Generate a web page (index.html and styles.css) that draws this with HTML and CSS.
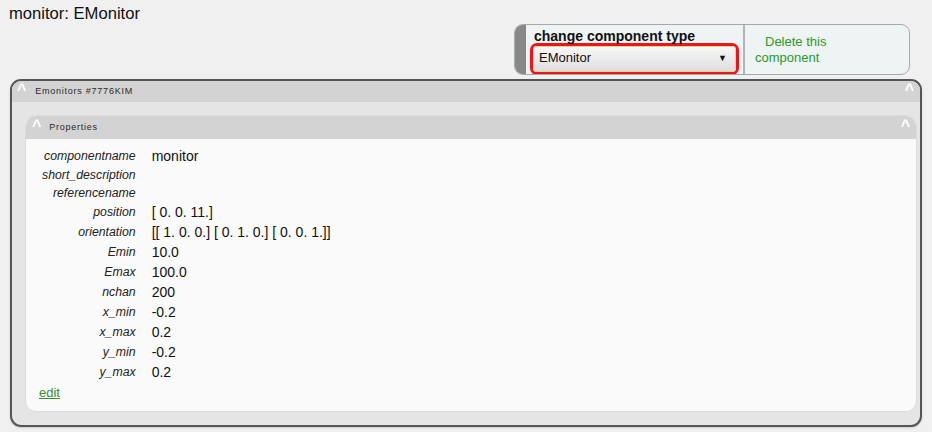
FILE: index.html
```html
<!DOCTYPE html>
<html>
<head>
<meta charset="utf-8">
<link rel="stylesheet" href="styles.css">
</head>
<body>
<h1 class="title">monitor: EMonitor</h1>
<div class="toolbar-row">
  <div class="toolbar">
    <div class="grip"></div>
    <div class="type-section">
      <div class="type-label">change component type</div>
      <div class="select-ring">
        <div class="select"><span>EMonitor</span><span class="arrow">▼</span></div>
      </div>
    </div>
    <div class="delete-section">
      <a class="delete-link">Delete this component</a>
    </div>
  </div>
</div>
<div class="panel outer">
  <div class="panel-head">
    <span class="caret">^</span>
    <span class="panel-title">Emonitors #7776KIM</span>
    <span class="caret caret-right">^</span>
  </div>
  <div class="outer-body">
    <div class="panel inner">
      <div class="panel-head inner-head">
        <span class="caret">^</span>
        <span class="panel-title">Properties</span>
        <span class="caret caret-right">^</span>
      </div>
      <div class="inner-body">
        <table class="props">
          <tr><td class="k">componentname</td><td class="v">monitor</td></tr>
          <tr><td class="k">short_description</td><td class="v empty"></td></tr>
          <tr><td class="k">referencename</td><td class="v empty"></td></tr>
          <tr><td class="k">position</td><td class="v">[ 0. 0. 11.]</td></tr>
          <tr><td class="k">orientation</td><td class="v">[[ 1. 0. 0.] [ 0. 1. 0.] [ 0. 0. 1.]]</td></tr>
          <tr><td class="k">Emin</td><td class="v">10.0</td></tr>
          <tr><td class="k">Emax</td><td class="v">100.0</td></tr>
          <tr><td class="k">nchan</td><td class="v">200</td></tr>
          <tr><td class="k">x_min</td><td class="v">-0.2</td></tr>
          <tr><td class="k">x_max</td><td class="v">0.2</td></tr>
          <tr><td class="k">y_min</td><td class="v">-0.2</td></tr>
          <tr><td class="k">y_max</td><td class="v">0.2</td></tr>
        </table>
        <a class="edit" href="#">edit</a>
      </div>
    </div>
  </div>
</div>
</body>
</html>
```
FILE: styles.css
```css
html, body {
  margin: 0;
  padding: 0;
}
body {
  background: #f0f0f0;
  font-family: "Liberation Sans", Arial, sans-serif;
  color: #111;
  width: 932px;
  height: 432px;
  overflow: hidden;
}
.title {
  margin: 0;
  padding: 4px 9px 0;
  font-size: 16.6px;
  font-weight: normal;
  line-height: 20px;
  color: #111;
}
.toolbar-row {
  display: flex;
  justify-content: flex-end;
  padding-right: 22px;
  margin-top: 0;
}
.toolbar {
  display: flex;
  width: 396px;
  height: 51px;
  box-sizing: border-box;
  border: 1px solid #a8a8a8;
  border-radius: 9px;
  background: #eef3f3;
  overflow: hidden;
}
.grip {
  width: 11px;
  background: #888;
}
.type-section {
  width: 219px;
  box-sizing: border-box;
  padding: 4px 0 0 4px;
  border-right: 2px solid #b4b4b4;
}
.type-label {
  font-weight: bold;
  font-size: 14px;
  line-height: 14px;
  padding-left: 4px;
  color: #111;
}
.select-ring {
  width: 209px;
  height: 32px;
  box-sizing: border-box;
  border: 3px solid #ee1418;
  border-radius: 7px;
  padding: 0;
  margin-top: 0;
}
.select {
  height: 100%;
  box-sizing: border-box;
  border: 1px solid #c9dc9c;
  border-radius: 3px;
  background: linear-gradient(#f7f7f7, #dedede);
  display: flex;
  align-items: center;
  justify-content: space-between;
  padding: 0 8px 3px 5px;
  font-size: 13px;
  color: #111;
}
.arrow {
  font-size: 9px;
  color: #111;
}
.delete-section {
  flex: 1;
  padding: 9px 0 0 10px;
}
.delete-link {
  display: block;
  color: #2a9a2a;
  font-size: 13px;
  line-height: 16px;
  text-indent: 10px;
  width: 130px;
}
.panel {
  box-sizing: border-box;
}
.outer {
  margin: 4px 10px 0 10px;
  height: 348px;
  border: 2px solid #555;
  border-radius: 11px;
  background: #e5e5e5;
  overflow: hidden;
  box-shadow: 0 1px 2px rgba(0,0,0,0.15);
}
.panel-head {
  display: flex;
  align-items: flex-start;
  height: 21px;
  background: #d3d3d3;
  color: #fff;
}
.caret {
  font-weight: bold;
  font-size: 16px;
  line-height: 18px;
  color: #fff;
  padding-left: 5px;
}
.caret-right {
  margin-left: auto;
  padding-left: 0;
  padding-right: 6px;
}
.panel-title {
  font-size: 9px;
  font-weight: 400;
  color: #2a2a2a;
  line-height: 21px;
  margin-left: 9px;
  letter-spacing: 0.75px;
}
.outer-body {
  padding: 13px 3px 13px 13px;
}
.inner {
  height: 297px;
  border-radius: 11px;
  background: #fafafa;
  overflow: hidden;
  border: 1px solid #dcdcdc;
}
.inner-head {
  height: 23px;
}
.inner-head .caret {
  padding-left: 6px;
  line-height: 19px;
}
.inner-head .caret-right {
  padding-left: 0;
  padding-right: 6px;
}
.inner-head .panel-title {
  line-height: 23px;
  margin-left: 8px;
}
.inner-body {
  padding: 6px 0 0 16px;
}
.props {
  border-collapse: separate;
  border-spacing: 0 2px;
}
.props td {
  padding: 1px 0;
  vertical-align: middle;
}
.k {
  font-style: italic;
  font-size: 12.3px;
  line-height: 14px;
  text-align: right;
  padding-right: 9px !important;
  color: #222;
}
.v {
  font-size: 14px;
  line-height: 16px;
  padding-left: 7px !important;
  color: #111;
}
.v.empty {
  font-size: 12px;
  line-height: 14px;
}
.edit {
  display: inline-block;
  margin-top: -1px;
  margin-left: -3px;
  font-size: 13px;
  color: #3d8b37;
  text-decoration: underline;
}
```
